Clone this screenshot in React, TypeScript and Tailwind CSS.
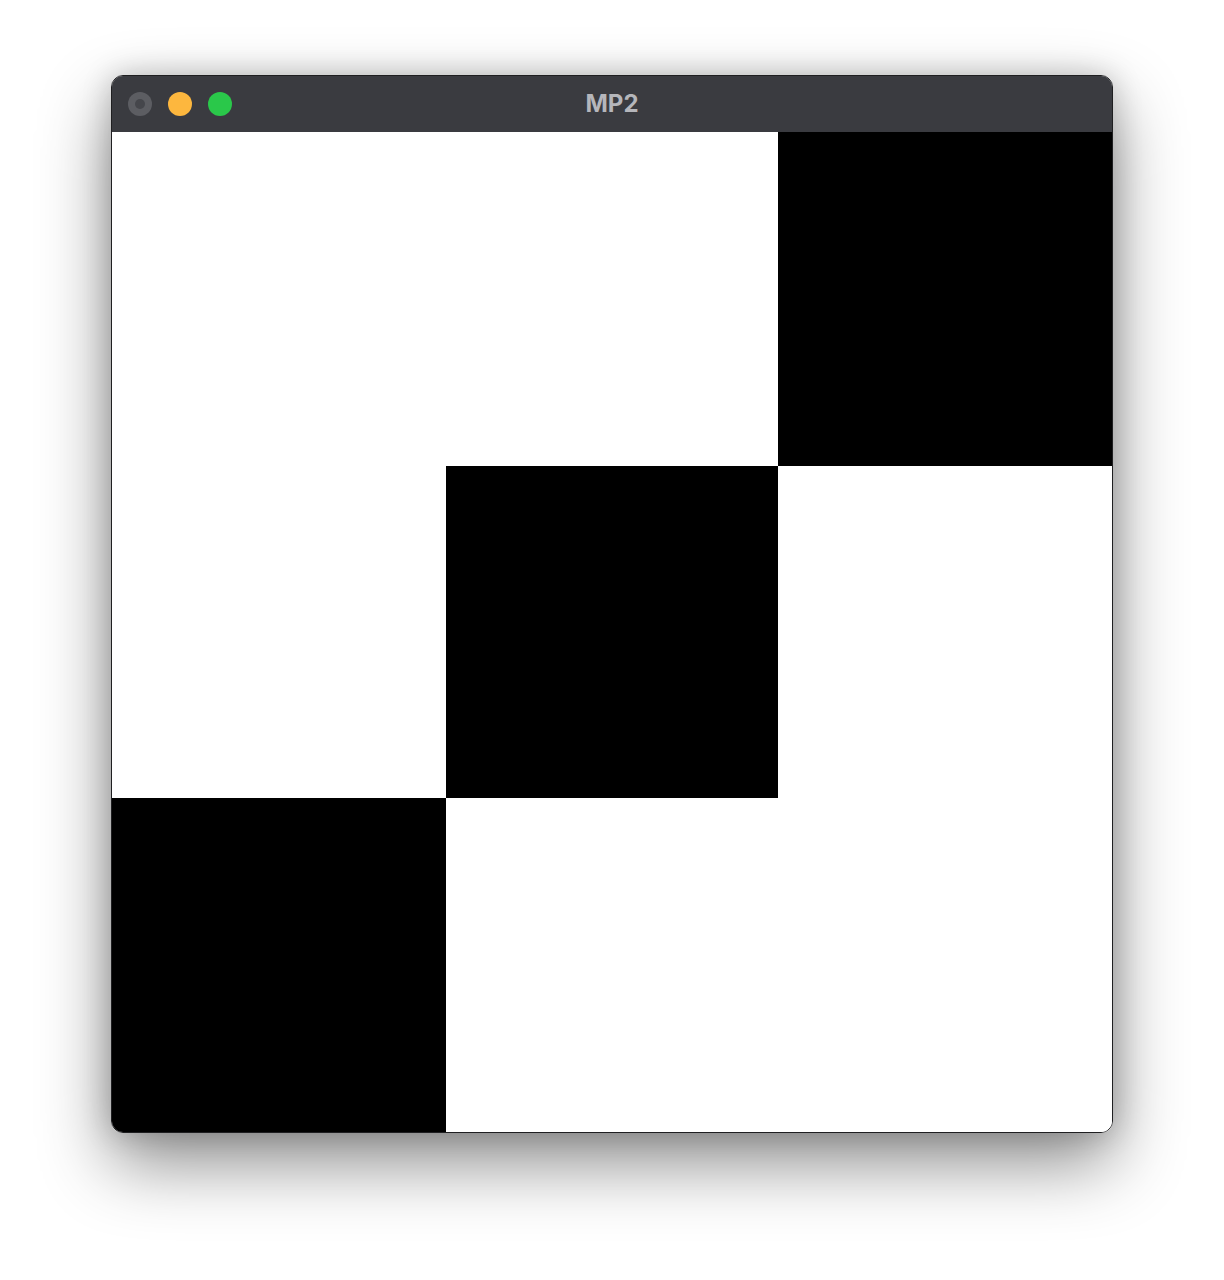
export default function App() {
    const cells = [false, false, true, false, true, false, true, false, false];
    return (
        <div className="min-h-[1280px] w-full bg-white pt-[75px] font-['Inter','Liberation_Sans',sans-serif]">
            <div className="mx-auto w-[1002px] overflow-hidden rounded-[12px] border border-[#1f1f21] shadow-[0_30px_70px_rgba(0,0,0,0.45),0_0_30px_rgba(0,0,0,0.2)]">
                <div className="relative flex h-[56px] items-center bg-[#3a3b40] px-[16px]">
                    <div className="flex items-center gap-[16px]">
                        <span className="flex h-[24px] w-[24px] items-center justify-center rounded-full bg-[#5c5d62]">
                            <span className="h-[10px] w-[10px] rounded-full bg-[#45464b]" />
                        </span>
                        <span className="h-[24px] w-[24px] rounded-full bg-[#fdb73e]" />
                        <span className="h-[24px] w-[24px] rounded-full bg-[#2ac84a]" />
                    </div>
                    <div className="absolute inset-0 flex items-center justify-center text-[24px] font-bold text-[#b5b6bb]">
                        MP2
                    </div>
                </div>
                <div className="grid grid-cols-[334px_332px_334px] grid-rows-[334px_332px_334px]">
                    {cells.map((black, i) => (
                        <div key={i} className={black ? "bg-black" : "bg-white"} />
                    ))}
                </div>
            </div>
        </div>
    );
}
